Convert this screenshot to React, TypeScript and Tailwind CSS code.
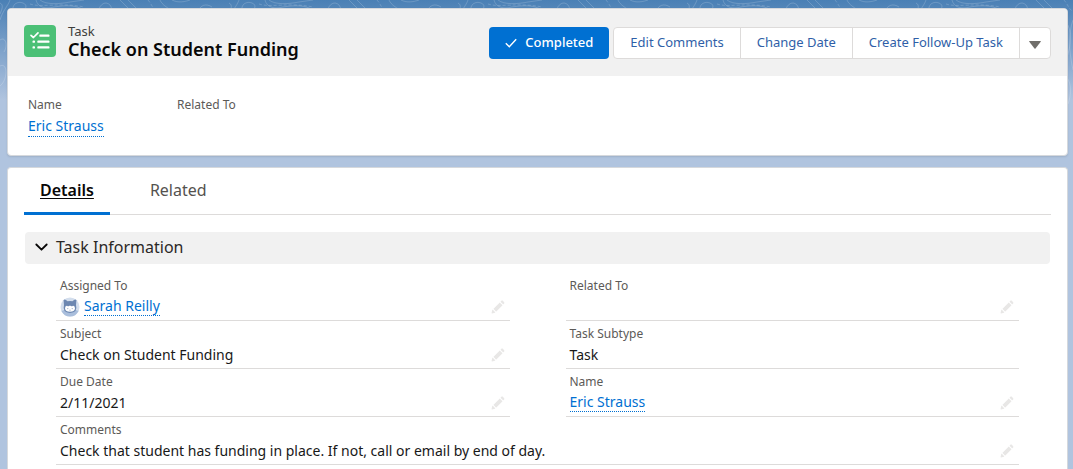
import React, { useState } from 'react';

function Contours() {
  return (
    <svg className="absolute inset-x-0 top-0 h-40 w-full" aria-hidden="true">
      <defs>
        <pattern id="contours" width="229" height="160" patternUnits="userSpaceOnUse">
          <g fill="none" stroke="#fff" strokeOpacity="0.17" strokeWidth="1">
            <path d="M0 3 C4 5 2 9 0 14 M10 0 C8 6 3 10 0 20 M13 10 C12 4 18 1 23 3 C28 5 26 9 22 12" />
            <path d="M40 0 C46 5 60 4 70 2 L84 0 M36 0 C38 8 46 9 54 7 C66 5 76 5 84 10" />
            <path strokeDasharray="3 2" d="M30 4 C42 8 60 2 84 7 M148 0 C152 4 152 9 158 12" />
            <path d="M98 12 C100 3 106 1 110 5 C112 8 112 10 110 14 M120 0 L132 12 M128 0 L140 12" />
            <path d="M160 0 C162 5 168 8 174 12 M172 0 C178 3 184 2 190 0 M198 12 C200 5 206 3 212 7" />
            <path d="M0 40 C6 36 8 46 4 52 M0 66 C8 62 8 80 0 86 M150 22 C156 30 156 44 150 60" />
            <path d="M157 20 C152 34 153 52 157 70 M151 78 C156 84 155 96 152 104" />
          </g>
        </pattern>
      </defs>
      <rect width="100%" height="100%" fill="url(#contours)" />
    </svg>
  );
}

function PencilIcon() {
  return (
    <svg viewBox="0 0 52 52" className="size-[14px]" fill="currentColor" aria-hidden="true">
      <path d="M9.5 33.4l8.9 8.9c.4.4 1 .4 1.4 0L42 20c.4-.4.4-1 0-1.4l-8.8-8.8c-.4-.4-1-.4-1.4 0L9.5 32.1c-.4.4-.4 1 0 1.3zM36.1 5.7c-.4.4-.4 1 0 1.4l8.800 8.8c.4.4 1 .4 1.4 0l2.5-2.5c1.600-1.5 1.600-3.9 0-5.5l-4.700-4.700c-1.600-1.600-4.100-1.600-5.700 0l-2.300 2.5zM2.100 48.200c-.2 1 .7 1.900 1.700 1.700l10.900-2.600c.4-.1.7-.3.9-.5l.2-.2c.2-.2.3-.9-.1-1.300l-9-9c-.4-.4-1.100-.3-1.300-.1l-.2.2c-.3.3-.4.6-.5.9L2.100 48.200z" />
    </svg>
  );
}

function TaskIcon() {
  return (
    <svg viewBox="0 0 32 32" className="size-8 shrink-0 rounded-sm bg-[#4bc076]" aria-hidden="true">
      <path d="M7 10.300 l2.400 2.200 L14 7.800" fill="none" stroke="#fff" strokeWidth="1.700" strokeLinecap="round" strokeLinejoin="round" />
      <g fill="#fff">
        <rect x="15.300" y="9.400" width="10.200" height="2.400" rx=".9" />
        <rect x="13.300" y="15.400" width="12.200" height="2.400" rx=".9" />
        <rect x="13.300" y="21.200" width="12.200" height="2.400" rx=".9" />
        <rect x="8.500" y="15.400" width="2.500" height="2.400" rx=".9" />
        <rect x="8.500" y="21.200" width="2.500" height="2.400" rx=".9" />
      </g>
    </svg>
  );
}

function Avatar() {
  return (
    <svg viewBox="0 0 20 20" className="size-5 shrink-0" aria-hidden="true">
      <circle cx="10" cy="10" r="9.500" fill="#d3deed" />
      <path d="M1.500 14 Q10 10 18.500 14 Q16 19.500 10 19.500 Q4 19.500 1.500 14Z" fill="#a9bedc" />
      <path d="M3.600 3 Q4.500 2 6 3 L7.500 4.300 Q10 3.600 12.500 4.300 L14 3 Q15.500 2 16.400 3 L16 8 Q18 15.500 10 16 Q2 15.500 4 8Z" fill="#6c87b1" />
      <path d="M5 11.500 Q5 8.500 7 8.700 Q8.500 10 10 8.500 Q11.500 10 13 8.700 Q15 8.500 15 11.500 Q14.500 14.800 10 14.800 Q5.500 14.800 5 11.500Z" fill="#fff" />
      <circle cx="7.800" cy="11.600" r=".6" fill="#8fa3c4" />
      <circle cx="12.200" cy="11.600" r=".6" fill="#8fa3c4" />
      <path d="M9 13 Q10 13.700 11 13" fill="none" stroke="#8fa3c4" strokeWidth=".5" />
    </svg>
  );
}

function RecordLink({ children }: { children: React.ReactNode }) {
  return (
    <a href="#record" className="border-b border-dotted border-[#0070d2] leading-[18px] text-[#0070d2]">
      {children}
    </a>
  );
}

type FieldProps = { label: string; children?: React.ReactNode; editable?: boolean; wide?: boolean };

function Field({ label, children, editable = true, wide = false }: FieldProps) {
  return (
    <div className={wide ? 'col-span-2 border-b border-[#dddbda] px-1 pt-1' : 'border-b border-[#dddbda] px-1 pt-1'}>
      <dt className="text-xs leading-[18px] text-[#5c5a57]">{label}</dt>
      <dd className="flex h-[25px] items-center justify-between pb-0.5 text-sm text-[#181818]">
        <div className="flex items-center gap-1">{children}</div>
        {editable && (
          <button type="button" aria-label={`Edit ${label}`} className="pr-px text-[#e8e7e6]">
            <PencilIcon />
          </button>
        )}
      </dd>
    </div>
  );
}

export default function App() {
  const [open, setOpen] = useState(true);
  const action = 'border-r border-[#dddbda] px-4';
  return (
    <div className="relative flex min-h-screen flex-col bg-[#b0c4df] bg-linear-to-b from-[#4a80b5] from-0% to-[#b0c4df] to-[100px] font-['Noto_Sans','Open_Sans',sans-serif] text-[#181818]">
      <Contours />
      <main className="relative flex flex-1 flex-col gap-[11px] pt-2 pr-[5px] pl-[7px]">
        <section className="overflow-hidden rounded border border-[#d5d8dc] bg-white shadow-[0_1px_2px_rgba(0,0,0,0.1)]">
          <header className="flex items-start justify-between bg-[#f1f1f1] px-4 pt-[14px] pb-[15px]">
            <div className="flex items-start gap-3">
              <div className="pt-0.5">
                <TaskIcon />
              </div>
              <div className="pb-0.5">
                <p className="text-[13px] leading-4 text-[#3e3e3c]">Task</p>
                <h1 className="text-lg leading-5 font-semibold text-[#080707]">Check on Student Funding</h1>
              </div>
            </div>
            <div className="flex gap-1 pt-1 text-[13px]">
              <button type="button" className="flex h-8 items-center gap-2 rounded bg-[#0070d2] px-4 font-medium text-white">
                <svg viewBox="0 0 12 12" className="size-3" fill="none" stroke="currentColor" strokeWidth="1.400" aria-hidden="true">
                  <path d="M.8 6.300 L4.300 9.800 L11.200 2.300" />
                </svg>
                Completed
              </button>
              <div className="flex h-8 overflow-hidden rounded border border-[#dddbda] bg-white text-[#2f5fa8]">
                <button type="button" className={action}>Edit Comments</button>
                <button type="button" className={action}>Change Date</button>
                <button type="button" className={action}>Create Follow-Up Task</button>
                <button type="button" aria-label="More actions" className="flex w-[30px] items-center justify-center pt-1 text-[#706e6b]">
                  <svg viewBox="0 0 12 8" className="h-2 w-3" fill="currentColor" aria-hidden="true">
                    <path d="M.4 0 H11.600 Q12 .3 11.700 .8 L6.500 7.600 Q6 8 5.500 7.600 L.3 .8 Q0 .3 .4 0Z" />
                  </svg>
                </button>
              </div>
            </div>
          </header>
          <dl className="flex px-5 pt-5 pb-[18px]">
            <div className="w-[149px]">
              <dt className="text-xs leading-[18px] text-[#5c5a57]">Name</dt>
              <dd className="flex pt-0.5 text-sm">
                <a href="#record" className="border-b border-dotted border-[#0070d2] leading-5 text-[#0070d2]">Eric Strauss</a>
              </dd>
            </div>
            <div>
              <dt className="text-xs leading-[18px] text-[#5c5a57]">Related To</dt>
            </div>
          </dl>
        </section>

        <section className="flex-1 rounded-t border border-b-0 border-[#d5d8dc] bg-white px-4 pb-1">
          <div role="tablist" className="flex h-[47px] items-stretch gap-6 border-b border-[#dddbda] text-base">
            <button type="button" role="tab" aria-selected="true" className="-mb-px border-b-3 border-[#0070d2] px-4 font-semibold text-[#080707] underline decoration-1 underline-offset-2">
              Details
            </button>
            <button type="button" role="tab" aria-selected="false" className="px-4 pb-0.5 text-[#54524f]">Related</button>
          </div>
          <div className="px-px pt-[17px]">
            <h2>
              <button
                type="button"
                aria-expanded={open}
                onClick={() => setOpen(!open)}
                className="flex h-8 w-full items-center gap-2 rounded bg-[#f1f1f1] px-[10px] pb-0.5 text-base text-[#2b2826]"
              >
                <svg viewBox="0 0 13 8" className="h-2 w-[13px]" fill="none" stroke="#080707" strokeWidth="1.800" strokeLinecap="round" strokeLinejoin="round" aria-hidden="true">
                  <path d="M1.300 1.500 L6.500 6.700 L11.700 1.500" />
                </svg>
                Task Information
              </button>
            </h2>
            {open && (
              <dl className="grid grid-cols-2 gap-x-14 px-[31px] pt-[9px]">
                <Field label="Assigned To">
                  <Avatar />
                  <RecordLink>Sarah Reilly</RecordLink>
                </Field>
                <Field label="Related To" />
                <Field label="Subject">Check on Student Funding</Field>
                <Field label="Task Subtype" editable={false}>Task</Field>
                <Field label="Due Date">2/11/2021</Field>
                <Field label="Name">
                  <RecordLink>Eric Strauss</RecordLink>
                </Field>
                <Field label="Comments" wide>
                  Check that student has funding in place. If not, call or email by end of day.
                </Field>
              </dl>
            )}
          </div>
        </section>
      </main>
    </div>
  );
}
